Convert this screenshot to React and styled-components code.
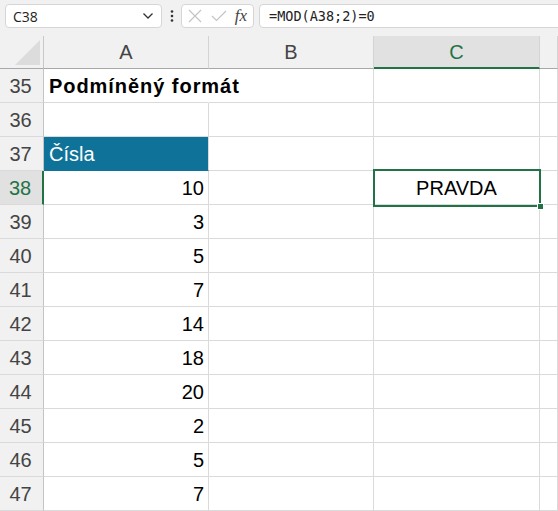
import React from 'react'
import styled, { createGlobalStyle } from 'styled-components'

const GlobalStyle = createGlobalStyle`
  html, body {
    margin: 0;
    padding: 0;
    background: #f1f1f1;
    font-family: "Liberation Sans", Arial, sans-serif;
  }
`

const Sheet = styled.div`
  width: 558px;
  height: 511px;
  overflow: hidden;
  background: #f1f1f1;
`

const Toolbar = styled.div`
  height: 36px;
  display: flex;
  align-items: flex-start;
  padding: 4px 0 0 5px;
  box-sizing: border-box;
`

const Field = styled.div`
  height: 24px;
  box-sizing: border-box;
  background: #fff;
  border: 1px solid #d6d6d6;
  border-radius: 4px;
  display: flex;
  align-items: center;
  width: ${p => p.$width}px;
  padding: 0 ${p => p.$pad || 0}px;
  margin-left: ${p => p.$ml || 0}px;
  flex-shrink: 0;
`

const NameText = styled.span`
  flex: 1;
  font-family: "Open Sans", "Liberation Sans", sans-serif;
  font-size: 14px;
  color: #222;
`

const Dots = styled.div`
  width: 19px;
  flex-shrink: 0;
  display: flex;
  justify-content: center;
  padding-top: 6px;
`

const FormulaText = styled.span`
  font-family: "DejaVu Sans Mono", "Liberation Mono", monospace;
  font-size: 13.5px;
  color: #222;
`

const Fx = styled.span`
  font-family: "Liberation Serif", "DejaVu Serif", serif;
  font-style: italic;
  font-size: 17px;
  color: #444;
  margin-left: auto;
`

const IconSlot = styled.span`
  display: flex;
  align-items: center;
  margin-right: ${p => p.$gap}px;
`

const Grid = styled.div`
  display: grid;
  grid-template-columns: 44px 165px 165px 166px 1fr;
  grid-template-rows: 33px;
  grid-auto-rows: 34px;
`

const Corner = styled.div`
  border-right: 1px solid #c8c8c8;
  border-bottom: 1px solid #a8a8a8;
  position: relative;
  &::after {
    content: '';
    position: absolute;
    right: 3px;
    bottom: 3px;
    width: 0;
    height: 0;
    border-left: 25px solid transparent;
    border-bottom: 25px solid #dcdcdc;
  }
`

const ColHead = styled.div`
  display: flex;
  align-items: center;
  justify-content: center;
  font-size: 20px;
  color: ${p => (p.$active ? '#217346' : '#444')};
  background: ${p => (p.$active ? '#e1e1e1' : '#f1f1f1')};
  border-right: 1px solid #d4d4d4;
  border-bottom: ${p => (p.$active ? '2px solid #217346' : '1px solid #a8a8a8')};
  box-sizing: border-box;
  padding-top: ${p => (p.$active ? '1px' : '0')};
`

const RowHead = styled.div`
  display: flex;
  align-items: center;
  justify-content: center;
  font-size: 20px;
  padding: 2px 2px 0 0;
  color: ${p => (p.$active ? '#217346' : '#444')};
  background: ${p => (p.$active ? '#e1e1e1' : '#f1f1f1')};
  border-right: ${p => (p.$active ? '2px solid #217346' : '1px solid #c4c4c4')};
  border-bottom: 1px solid #dadada;
  box-sizing: border-box;
`

const Cell = styled.div`
  position: relative;
  display: flex;
  align-items: center;
  justify-content: ${p => p.$align || 'flex-start'};
  padding: 2px ${p => (p.$align === 'flex-end' ? 4 : 5)}px 0;
  box-sizing: border-box;
  font-size: 20px;
  font-weight: ${p => (p.$bold ? 700 : 400)};
  letter-spacing: ${p => (p.$bold ? '0.95px' : '0')};
  color: ${p => (p.$fill ? '#fff' : '#000')};
  background: ${p => p.$fill || '#fff'};
  border-right: 1px solid ${p => (p.$noRight ? 'transparent' : '#dadada')};
  border-bottom: 1px solid ${p => (p.$fill ? p.$fill : '#dadada')};
  white-space: nowrap;
  z-index: ${p => (p.$top ? 2 : 0)};
`

const Selection = styled.div`
  position: absolute;
  left: -1px;
  top: -2px;
  right: -2px;
  bottom: -3px;
  border: 2px solid #217346;
  pointer-events: none;
`

const Handle = styled.div`
  position: absolute;
  right: -5px;
  bottom: -5px;
  width: 7px;
  height: 7px;
  background: #217346;
  border: 1px solid #fff;
  box-sizing: border-box;
`

const numbers = [10, 3, 5, 7, 14, 18, 20, 2, 5, 7]

const Chevron = () => (
  <svg width="12" height="8" viewBox="0 0 12 8">
    <path d="M1.5 1.5 L6 6 L10.5 1.5" fill="none" stroke="#333" strokeWidth="1.3" />
  </svg>
)

const VDots = () => (
  <svg width="4" height="12" viewBox="0 0 4 12">
    <circle cx="2" cy="1.5" r="1.3" fill="#333" />
    <circle cx="2" cy="6" r="1.3" fill="#333" />
    <circle cx="2" cy="10.5" r="1.3" fill="#333" />
  </svg>
)

const Cross = () => (
  <svg width="14" height="14" viewBox="0 0 14 14">
    <path d="M1 1 L13 13 M13 1 L1 13" stroke="#c4c4c4" strokeWidth="1.2" fill="none" />
  </svg>
)

const Check = () => (
  <svg width="16" height="12" viewBox="0 0 16 12">
    <path d="M1 6 L5.5 10.5 L15 1" stroke="#c4c4c4" strokeWidth="1.2" fill="none" />
  </svg>
)

function Row({ n, active, children }) {
  return (
    <>
      <RowHead $active={active}>{n}</RowHead>
      {children}
    </>
  )
}

export default function App() {
  return (
    <Sheet>
      <GlobalStyle />
      <Toolbar>
        <Field $width={157} $pad={7}>
          <NameText>C38</NameText>
          <Chevron />
        </Field>
        <Dots>
          <VDots />
        </Dots>
        <Field $width={73} $pad={6}>
          <IconSlot $gap={9}><Cross /></IconSlot>
          <IconSlot $gap={0}><Check /></IconSlot>
          <Fx>fx</Fx>
        </Field>
        <Field $width={310} $pad={9} $ml={5}>
          <FormulaText>=MOD(A38;2)=0</FormulaText>
        </Field>
      </Toolbar>

      <Grid>
        <Corner />
        <ColHead>A</ColHead>
        <ColHead>B</ColHead>
        <ColHead $active>C</ColHead>
        <ColHead />

        <Row n={35}>
          <Cell $bold $noRight $top>Podmíněný formát</Cell>
          <Cell />
          <Cell />
          <Cell />
        </Row>
        <Row n={36}>
          <Cell />
          <Cell />
          <Cell />
          <Cell />
        </Row>
        <Row n={37}>
          <Cell $fill="#0f7399">Čísla</Cell>
          <Cell />
          <Cell />
          <Cell />
        </Row>
        {numbers.map((v, i) => {
          const n = 38 + i
          const active = n === 38
          return (
            <Row key={n} n={n} active={active}>
              <Cell $align="flex-end">{v}</Cell>
              <Cell />
              <Cell $align="center" $top={active}>
                {active && 'PRAVDA'}
                {active && (
                  <Selection>
                    <Handle />
                  </Selection>
                )}
              </Cell>
              <Cell />
            </Row>
          )
        })}
      </Grid>
    </Sheet>
  )
}
